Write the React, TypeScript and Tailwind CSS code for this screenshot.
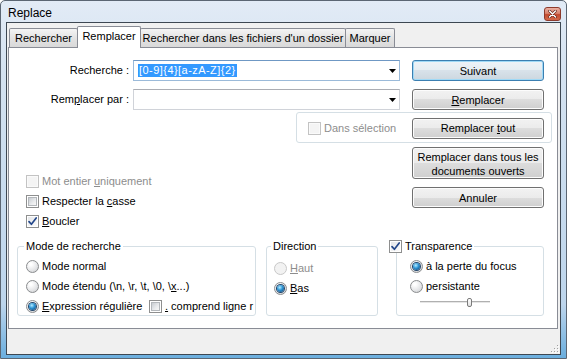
import React from 'react';

function Check({ checked = false, disabled = false }: { checked?: boolean; disabled?: boolean }) {
  return (
    <span
      className={`relative flex h-[13px] w-[13px] shrink-0 items-center justify-center border ${
        disabled ? 'border-[#c3c3c3] bg-[#fafafa]' : 'border-[#8e8f8f] bg-white'
      }`}
    >
      <span
        className={`block h-[9px] w-[9px] ${
          disabled
            ? 'bg-[#f4f4f4]'
            : checked
            ? 'bg-[linear-gradient(135deg,#e4e6e9,#fbfbfb)]'
            : 'border border-[#b3b7bb] bg-[linear-gradient(135deg,#c8ccd1,#e9ebed_60%,#f7f7f7)]'
        }`}
      />
      {checked && (
        <svg className="absolute left-0 top-0" width="11" height="11" viewBox="0 0 11 11">
          <path d="M2 5.6 L4.4 8.3 L9.2 2" stroke="#23478a" strokeWidth="1.7" fill="none" strokeLinecap="round" strokeLinejoin="round" />
        </svg>
      )}
    </span>
  );
}

function Radio({ checked = false, disabled = false }: { checked?: boolean; disabled?: boolean }) {
  return (
    <span
      className={`flex h-[13px] w-[13px] shrink-0 items-center justify-center rounded-full border ${
        disabled
          ? 'border-[#c8c8c8] bg-[#f2f2f2]'
          : 'border-[#8a8c8e] bg-[radial-gradient(circle_at_35%_30%,#ffffff_10%,#e3e4e6_60%,#c6c8cb)]'
      }`}
    >
      {checked && (
        <span className="block h-[7px] w-[7px] rounded-full bg-[radial-gradient(circle_at_40%_35%,#b5ecff,#2b93d4_45%,#0b3766)] shadow-[0_0_0_1px_#20456b]" />
      )}
    </span>
  );
}

function Btn({
  children,
  def = false,
  tall = false,
  className = '',
}: {
  children: React.ReactNode;
  def?: boolean;
  tall?: boolean;
  className?: string;
}) {
  return (
    <div
      className={`flex w-[132px] shrink-0 items-center justify-center rounded-[3px] border text-center ${
        tall ? 'h-[32px] pt-[2px] leading-[14px]' : 'h-[21px] pt-[1px]'
      } ${
        def
          ? 'border-[#3c7fb1] bg-[linear-gradient(#eef3f7_0%,#e6edf2_50%,#d8e2ea_50%,#ccd7df_100%)] shadow-[inset_0_0_0_1px_#9fd9f6]'
          : 'border-[#707070] bg-[linear-gradient(#f2f2f2_0%,#ebebeb_50%,#dddddd_50%,#cfcfcf_100%)] shadow-[inset_0_0_0_1px_#fcfcfc]'
      } ${className}`}
    >
      <span>{children}</span>
    </div>
  );
}

function Arrow() {
  return (
    <svg className="ml-auto shrink-0" width="7" height="4" viewBox="0 0 7 4">
      <path d="M0 0H7L3.5 4Z" fill="#000" />
    </svg>
  );
}

export default function App() {
  return (
    <div className="font-['Liberation_Sans',Arial,sans-serif] text-[11px] leading-[13px] text-black">
      <div className="flex h-[359px] w-[567px] flex-col rounded-t-[5px] border border-[#5b6673] bg-[linear-gradient(#e2ebf6,#d4e2f0_20%,#bdd5ec_85%,#6aaede)]">
        {/* Title bar */}
        <div className="flex h-[21px] items-start">
          <span className="ml-[7px] mt-[5px] text-[12px] leading-[14px]">Replace</span>
          <div className="ml-auto mr-[5px] mt-[6px] flex h-[14px] w-[17px] items-center justify-center rounded-[3px] border border-[#8d3a2c] bg-[linear-gradient(#eab0a3,#d8816b_45%,#c34a2f_55%,#d36a4a)]">
            <svg width="9" height="8" viewBox="0 0 9 8">
              <path d="M1.5 1 L7.5 7 M7.5 1 L1.5 7" stroke="#5a1c10" strokeWidth="2.6" strokeLinecap="round" />
              <path d="M1.5 1 L7.5 7 M7.5 1 L1.5 7" stroke="#ffffff" strokeWidth="1.5" strokeLinecap="round" />
            </svg>
          </div>
        </div>

        {/* Client area */}
        <div className="mx-[5px] flex h-[333px] flex-col border border-[#3d4752] bg-[#f0f0f0]">
          {/* Tabs */}
          <div className="flex h-[24px] items-end pl-[2px]">
            <div className="flex h-[19px] w-[69px] items-center justify-center rounded-t-[2px] border border-b-0 border-[#898c95] bg-[linear-gradient(#f4f4f4,#e3e3e3_50%,#d9d9d9)] pt-[1px]">
              Rechercher
            </div>
            <div className="relative z-10 -mb-px -ml-px flex h-[22px] w-[64px] items-start justify-center rounded-t-[2px] border border-b-0 border-[#898c95] bg-white pt-[3px]">
              Remplacer
            </div>
            <div className="-ml-px flex h-[19px] w-[206px] items-center justify-center rounded-t-[2px] border border-b-0 border-[#898c95] bg-[linear-gradient(#f4f4f4,#e3e3e3_50%,#d9d9d9)] pt-[1px]">
              Rechercher dans les fichiers d'un dossier
            </div>
            <div className="-ml-px flex h-[19px] w-[50px] items-center justify-center rounded-t-[2px] border border-b-0 border-[#898c95] bg-[linear-gradient(#f4f4f4,#e3e3e3_50%,#d9d9d9)] pt-[1px]">
              Marquer
            </div>
          </div>

          {/* Panel */}
          <div className="ml-[1px] flex h-[282px] w-[550px] flex-col border border-[#898c95] bg-white pt-[12px]">
            {/* Row A */}
            <div className="flex h-[21px] items-center">
              <div className="w-[122px] pr-[2px] text-right">Recherche :</div>
              <div className="ml-[2px] flex h-[21px] w-[267px] items-center border border-[#9bbad9] border-t-[#6f98c4] bg-white pl-[4px] pr-[3px]">
                <span className="bg-[#3399ff] px-[1px] tracking-[0.45px] text-white">{'[0-9]{4}[a-zA-Z]{2}'}</span>
                <Arrow />
              </div>
              <Btn def className="ml-[12px]">
                Suivant
              </Btn>
            </div>

            {/* Row B */}
            <div className="mt-[8px] flex h-[21px] items-center">
              <div className="w-[122px] pr-[2px] text-right">
                Rem<u>p</u>lacer par :
              </div>
              <div className="ml-[2px] flex h-[21px] w-[267px] items-center border border-[#d0d3d9] border-t-[#abadb3] bg-white pl-[4px] pr-[3px]">
                <Arrow />
              </div>
              <Btn className="ml-[12px]">
                <u>R</u>emplacer
              </Btn>
            </div>

            {/* Row C: Dans sélection group */}
            <div className="ml-[287px] mt-[2px] flex h-[31px] w-[256px] items-center rounded-[3px] border border-[#d5dfe5] pl-[11px] pr-[7px] pt-[1px]">
              <Check disabled />
              <span className="ml-[3px] text-[#8d8d8d]">Dans sélection</span>
              <Btn className="ml-auto">
                Remplacer <u>t</u>out
              </Btn>
            </div>

            {/* Row D */}
            <div className="flex h-[97px]">
              <div className="flex w-[403px] flex-col pl-[17px] pt-[28px]">
                <div className="flex h-[20px] items-center gap-[3px]">
                  <Check disabled />
                  <span className="text-[#8d8d8d]">
                    Mot entier <u>u</u>niquement
                  </span>
                </div>
                <div className="flex h-[20px] items-center gap-[3px]">
                  <Check />
                  <span>
                    Respecter la <u>c</u>asse
                  </span>
                </div>
                <div className="flex h-[20px] items-center gap-[3px]">
                  <Check checked />
                  <span>
                    <u>B</u>oucler
                  </span>
                </div>
              </div>
              <div className="flex flex-col pt-[4px]">
                <Btn tall>
                  Remplacer dans tous les
                  <br />
                  documents ouverts
                </Btn>
                <Btn className="mt-[8px]">Annuler</Btn>
              </div>
            </div>

            {/* Row E: group boxes */}
            <div className="flex h-[76px] items-start">
              <fieldset className="ml-[8px] h-[76px] w-[239px] rounded-[3px] border border-[#d5dfe5]">
                <legend className="ml-[6px] px-[2px] leading-[13px]">Mode de recherche</legend>
                <div className="flex flex-col pl-[8px] pt-[3px]">
                  <div className="flex h-[20px] items-center gap-[3px]">
                    <Radio />
                    <span>Mode normal</span>
                  </div>
                  <div className="flex h-[20px] items-center gap-[3px]">
                    <Radio />
                    <span>
                      {'Mode étendu (\\n, \\r, \\t, \\0, \\'}
                      <u>x</u>
                      {'...)'}
                    </span>
                  </div>
                  <div className="flex h-[20px] items-center">
                    <Radio checked />
                    <span className="ml-[3px] w-[107px] shrink-0 whitespace-nowrap">
                      <u>E</u>xpression régulière
                    </span>
                    <Check />
                    <span className="ml-[3px] whitespace-nowrap">
                      <u>.</u> comprend ligne r
                    </span>
                  </div>
                </div>
              </fieldset>

              <fieldset className="ml-[10px] h-[76px] w-[112px] rounded-[3px] border border-[#d5dfe5]">
                <legend className="ml-[4px] px-[2px] leading-[13px]">Direction</legend>
                <div className="flex flex-col pl-[7px] pt-[5px]">
                  <div className="flex h-[20px] items-center gap-[3px]">
                    <Radio disabled />
                    <span className="text-[#8d8d8d]">
                      <u>H</u>aut
                    </span>
                  </div>
                  <div className="flex h-[20px] items-center gap-[3px]">
                    <Radio checked />
                    <span>
                      <u>B</u>as
                    </span>
                  </div>
                </div>
              </fieldset>

              <fieldset className="ml-[18px] h-[76px] w-[148px] rounded-[3px] border border-[#d5dfe5]">
                <legend className="-ml-[8px] flex items-center gap-[3px] pr-[2px] leading-[13px]">
                  <Check checked />
                  <span>Transparence</span>
                </legend>
                <div className="flex flex-col pl-[13px] pt-[3px]">
                  <div className="flex h-[20px] items-center gap-[3px]">
                    <Radio checked />
                    <span>à la perte du focus</span>
                  </div>
                  <div className="flex h-[20px] items-center gap-[3px]">
                    <Radio />
                    <span>persistante</span>
                  </div>
                  <div className="relative ml-[10px] h-[11px] w-[70px]">
                    <div className="absolute left-0 top-[5px] h-[2px] w-[70px] border-t border-[#b0b0b0] bg-[#e6e6e6]" />
                    <div className="absolute left-[47px] top-[2px] h-[9px] w-[5px] rounded-[2px] border border-[#7a7a7a] bg-[linear-gradient(#ffffff,#e2e2e2)]" />
                  </div>
                </div>
              </fieldset>
            </div>
          </div>

          {/* Bottom strip with grip */}
          <div className="flex flex-1 items-end justify-end pb-[1px] pr-[1px]">
            <svg width="9" height="9" viewBox="0 0 9 9">
              <rect x="7" y="1" width="1" height="1" fill="#a0a0a0" />
              <rect x="4" y="4" width="1" height="1" fill="#a0a0a0" />
              <rect x="7" y="4" width="1" height="1" fill="#a0a0a0" />
              <rect x="1" y="7" width="1" height="1" fill="#a0a0a0" />
              <rect x="4" y="7" width="1" height="1" fill="#a0a0a0" />
              <rect x="7" y="7" width="1" height="1" fill="#a0a0a0" />
              <rect x="8" y="2" width="1" height="1" fill="#ffffff" />
              <rect x="5" y="5" width="1" height="1" fill="#ffffff" />
              <rect x="8" y="5" width="1" height="1" fill="#ffffff" />
              <rect x="2" y="8" width="1" height="1" fill="#ffffff" />
              <rect x="5" y="8" width="1" height="1" fill="#ffffff" />
              <rect x="8" y="8" width="1" height="1" fill="#ffffff" />
            </svg>
          </div>
        </div>
      </div>
    </div>
  );
}
